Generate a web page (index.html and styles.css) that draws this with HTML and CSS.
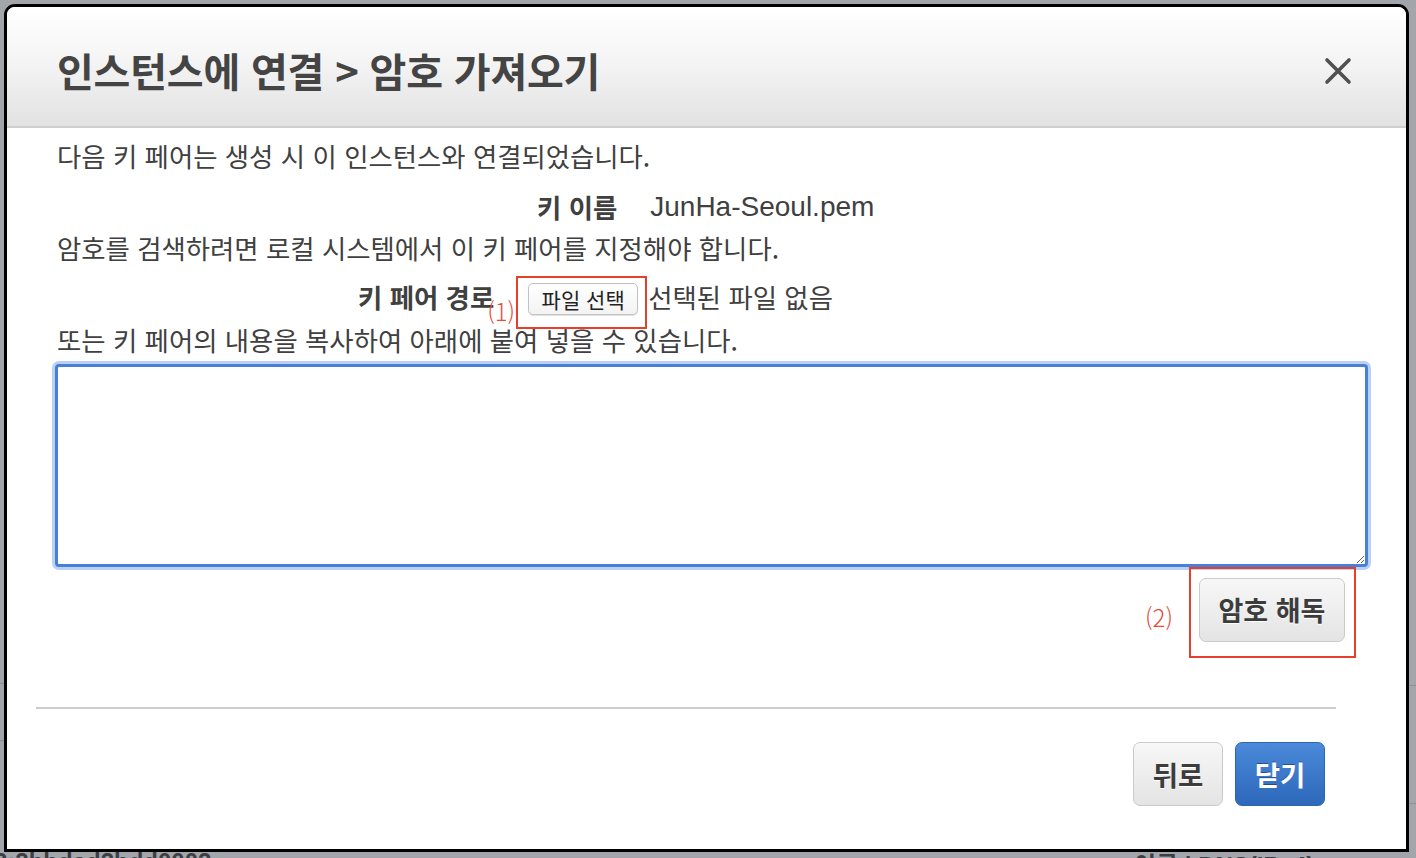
FILE: index.html
```html
<!DOCTYPE html>
<html lang="ko">
<head>
<meta charset="utf-8">
<title>인스턴스에 연결 &gt; 암호 가져오기</title>
<link rel="stylesheet" href="styles.css">
</head>
<body>
<div class="page">
  <div class="bg-left">
    <div class="bg-line l1"></div>
    <div class="bg-line l2"></div>
    <div class="bg-text">3:2bbdad2bdd0002</div>
  </div>
  <div class="bg-right">
    <div class="bg-line r1"></div>
    <div class="bg-line r2"></div>
    <div class="bg-text">이름 | DNS(IPv4)</div>
  </div>
</div>

<div class="modal">
  <div class="modal-header">
    <h1 class="modal-title">인스턴스에 연결 &gt; 암호 가져오기</h1>
    <button class="close-btn" aria-label="닫기">
      <svg width="28" height="28" viewBox="0 0 28 28"><path d="M3 3 L25 25 M25 3 L3 25" stroke="#505050" stroke-width="3.6" stroke-linecap="round" fill="none"/></svg>
    </button>
  </div>

  <div class="modal-body">
    <p class="line l-first">다음 키 페어는 생성 시 이 인스턴스와 연결되었습니다.</p>
    <div class="field-row key-name">
      <span class="field-label">키 이름</span>
      <span class="key-value">JunHa-Seoul.pem</span>
    </div>
    <p class="line l-third">암호를 검색하려면 로컬 시스템에서 이 키 페어를 지정해야 합니다.</p>
    <div class="field-row key-path">
      <span class="field-label path-label">키 페어 경로</span>
      <span class="anno anno-file">
        <span class="anno-num num1">(1)</span>
        <button class="file-btn">파일 선택</button>
      </span>
      <span class="file-status">선택된 파일 없음</span>
    </div>
    <p class="line l-fifth">또는 키 페어의 내용을 복사하여 아래에 붙여 넣을 수 있습니다.</p>
    <textarea class="key-area"></textarea>
    <div class="action-row">
      <span class="anno-num num2">(2)</span>
      <span class="anno anno-decrypt">
        <button class="btn btn-gray decrypt-btn">암호 해독</button>
      </span>
    </div>
  </div>

  <div class="separator"></div>

  <div class="modal-footer">
    <button class="btn btn-gray foot-btn">뒤로</button>
    <button class="btn btn-blue foot-btn">닫기</button>
  </div>
</div>
</body>
</html>
```

FILE: styles.css
```css
* { box-sizing: border-box; }

html, body {
  margin: 0;
  padding: 0;
  width: 1416px;
  height: 858px;
  overflow: hidden;
  background: #a2a6ab;
  font-family: "Noto Sans CJK KR", "Noto Sans", sans-serif;
}

/* background page (behind the overlay) */
.page {
  height: 858px;
  display: flex;
  justify-content: space-between;
  overflow: hidden;
}
.bg-left { width: 320px; padding-top: 683px; }
.bg-right { width: 320px; padding-top: 685px; }
.bg-line { border-top: 1px solid #8b8f94; }
.l1 { height: 57px; }
.l2 { height: 100px; }
.r1 { height: 118px; }
.r2 { height: 40px; }
.bg-text {
  font-family: "Liberation Sans", "Noto Sans CJK KR", sans-serif;
  font-size: 24px;
  line-height: 28px;
  font-weight: bold;
  color: #3b3e42;
  white-space: nowrap;
}
.bg-left .bg-text { margin-left: -6px; margin-top: 8px; }
.bg-right .bg-text { margin-left: 38px; margin-top: 9px; }

/* modal */
.modal {
  position: absolute;
  left: 4px;
  top: 4px;
  width: 1405px;
  height: 848px;
  border: 3px solid #000;
  border-radius: 11px 11px 0 0;
  background: #fff;
  display: flex;
  flex-direction: column;
  overflow: hidden;
  color: #404040;
}

.modal-header {
  height: 121px;
  flex: none;
  border-bottom: 2px solid #cfcfcf;
  background: linear-gradient(#ffffff 0%, #f6f6f6 40%, #e2e2e2 100%);
  display: flex;
  align-items: center;
  justify-content: space-between;
  padding: 6px 54px 0 50px;
}
.modal-title {
  margin: 0;
  font-size: 40px;
  line-height: 44px;
  font-weight: bold;
  color: #444;
  letter-spacing: -0.2px;
}
.close-btn {
  border: 0;
  background: transparent;
  padding: 0;
  width: 28px;
  height: 28px;
  display: flex;
  margin-top: 2px;
}

.modal-body {
  padding: 0 50px;
  flex: none;
}
.line {
  margin: 0;
  font-size: 26.4px;
  line-height: 40px;
  color: #404040;
  white-space: nowrap;
}
.l-first { margin-top: 8px; }
.l-third { margin-top: 1px; }
.l-fifth { margin-top: 3px; }

.field-row {
  display: flex;
  align-items: flex-start;
  font-size: 26.4px;
  line-height: 40px;
  white-space: nowrap;
}
.field-label { font-weight: bold; color: #404040; }
.key-name { margin-top: 11px; padding-left: 480px; }
.key-value {
  margin-left: 33px;
  font-family: "Liberation Sans", "Noto Sans CJK KR", sans-serif;
  font-size: 28px;
  color: #404040;
}
.key-path { margin-top: 8px; padding-left: 301px; }
.path-label { margin-top: 1px; }

.anno {
  position: relative;
  border: 2px solid #e5402a;
}
.anno-file {
  margin-left: 22px;
  height: 53px;
  margin-bottom: -12px;
  padding: 5px 7px 0 10px;
  display: flex;
  align-items: flex-start;
}
.anno-num {
  color: #e74c3c;
  font-family: "Noto Sans CJK KR", sans-serif;
  font-weight: 300;
  font-size: 24px;
  line-height: 26px;
}
.num1 {
  position: absolute;
  left: -31px;
  top: 20px;
}
.file-btn {
  width: 110px;
  height: 32px;
  border: 1px solid #c2c2c2;
  border-radius: 5px;
  background: linear-gradient(#ffffff, #f3f3f3);
  box-shadow: 0 1px 1px rgba(0,0,0,0.12);
  font-family: "Noto Sans CJK KR", sans-serif;
  font-size: 21px;
  line-height: 28px;
  color: #222;
  padding: 0;
}
.file-status {
  margin-left: 1px;
  margin-top: 1px;
  color: #404040;
}

.key-area {
  display: block;
  margin: 4px 0 0 -2px;
  width: 1313px;
  height: 203px;
  border: 3px solid #4a7fd9;
  border-radius: 4px;
  box-shadow: 0 0 0 3px #b9d1f6;
  outline: none;
  resize: both;
  font-family: "Liberation Mono", monospace;
  background: #fff;
}

.action-row {
  display: flex;
  justify-content: flex-end;
  align-items: center;
  margin-top: 0px;
}
.num2 { margin-right: 16px; margin-top: 8px; }
.anno-decrypt {
  padding: 9px 9px 14px 8px;
}

.btn {
  font-family: "Noto Sans CJK KR", sans-serif;
  font-weight: bold;
  font-size: 27px;
  line-height: 30px;
  border-radius: 7px;
  padding: 0;
  height: 64px;
}
.btn-gray {
  border: 1px solid #cacaca;
  background: linear-gradient(#f7f7f7, #e4e4e4);
  color: #3c3c3c;
  text-shadow: 0 1px 0 #fff;
}
.btn-blue {
  border: 1px solid #2f64b0;
  background: linear-gradient(#4a8ad9, #2d68bb);
  color: #fff;
  text-shadow: 0 -1px 0 rgba(0,0,0,0.35);
}
.decrypt-btn { width: 146px; display: block; }

.separator {
  height: 2px;
  background: #cccccc;
  margin: 49px 0 0 29px;
  width: 1300px;
}

.modal-footer {
  display: flex;
  justify-content: flex-end;
  gap: 12px;
  padding-right: 81px;
  margin-top: 33px;
}
.foot-btn { width: 90px; font-size: 27.5px; }
```
